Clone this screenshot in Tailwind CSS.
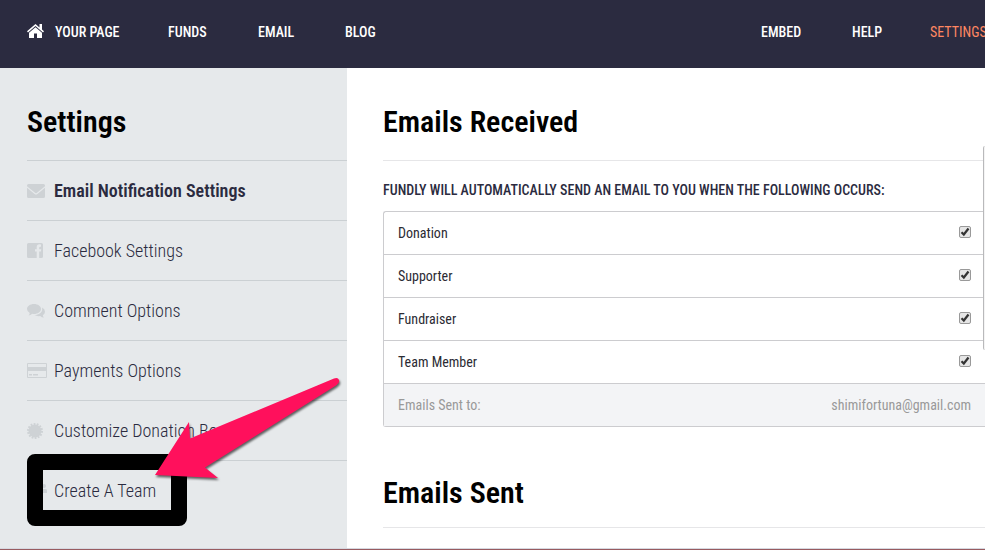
<!DOCTYPE html>
<html lang="en">
<head>
    <meta charset="UTF-8">
    <meta name="viewport" content="width=device-width, initial-scale=1.0">
    <title>Settings - Fundly</title>
    <script src="https://cdn.jsdelivr.net/npm/@tailwindcss/browser@4"></script>
</head>
<body class="relative min-h-screen flex flex-col overflow-x-hidden bg-white text-black font-['Roboto_Condensed','Roboto','Liberation_Sans',sans-serif]">
    <!-- Top navigation -->
    <header class="bg-[#2b2b40] text-white h-17 pl-[27px] flex items-center justify-between text-sm font-medium whitespace-nowrap">
        <nav class="flex items-center pb-1">
            <a href="#" class="flex items-center gap-[11px] w-[141px]">
                <svg class="w-[17px] h-[14px] mb-[3px]" viewBox="0 0 17 14" fill="currentColor">
                    <path d="M8.500 0 0 7.200l1 1.200 7.500-6.300L16 8.400l1-1.200-2-1.700V0h-2.500v3.400z"/>
                    <path d="M8.500 3.300 2 8.800V14h5V9.500h3V14h5V8.800z"/>
                </svg>
                YOUR PAGE
            </a>
            <a href="#" class="w-[90px]">FUNDS</a>
            <a href="#" class="w-[87px]">EMAIL</a>
            <a href="#">BLOG</a>
        </nav>
        <nav class="flex items-center pb-1">
            <a href="#" class="w-[91px]">EMBED</a>
            <a href="#" class="w-[78px]">HELP</a>
            <a href="#" class="w-[55px] font-normal text-[#ff8762]">SETTINGS</a>
        </nav>
    </header>

    <div class="grow flex">
        <!-- Settings menu -->
        <aside class="relative w-[347px] shrink-0 bg-[#e6e9eb] pl-[27px]">
            <h1 class="h-[92px] pt-9 text-[30px] leading-9 font-semibold">Settings</h1>
            <ul class="text-lg leading-6 font-light text-[#2b2b40]">
                <li class="border-t border-[#cbd0d3]">
                    <a href="#" class="flex items-center h-[59px] font-semibold">
                        <svg class="w-[18px] h-[14px] mr-[9px] text-[#ced2d5]" viewBox="0 0 18 14" fill="currentColor">
                            <path d="M1.500 0h15Q18 0 18 1.500v.8L9.700 9.100q-.7.500-1.400 0L0 2.300v-.8Q0 0 1.500 0z"/>
                            <path d="M0 3.800 7.600 10q1.400 1 2.800 0L18 3.800v8.700q0 1.500-1.500 1.500h-15Q0 14 0 12.500z"/>
                        </svg>
                        Email Notification Settings
                    </a>
                </li>
                <li class="border-t border-[#cbd0d3]">
                    <a href="#" class="flex items-center h-[59px]">
                        <svg class="w-4 h-[15px] mr-[11px] text-[#ced2d5]" viewBox="0 0 16 15" fill="currentColor">
                            <path d="M1.500 0h13Q16 0 16 1.500v12q0 1.500-1.500 1.500h-2.300V8.500h1.700l.3-2.200h-2V4.800q0-1.100 1.100-1.100H14V1.500q-4.300-.8-4.300 2.600v2.200H8v2.200h1.700V15H1.500Q0 15 0 13.500v-12Q0 0 1.500 0z"/>
                        </svg>
                        Facebook Settings
                    </a>
                </li>
                <li class="border-t border-[#cbd0d3]">
                    <a href="#" class="flex items-center h-[59px]">
                        <svg class="w-[18px] h-[14px] mr-[9px] text-[#ced2d5]" viewBox="0 0 18 14" fill="currentColor">
                            <path d="M7 0c3.900 0 7 2.200 7 5s-3.100 5-7 5q-.9 0-1.700-.2Q3.400 11.600 1.500 11.600q1.200-1.200 1.200-2.700Q0 7.500 0 5c0-2.800 3.100-5 7-5z"/>
                            <path d="M15 3.500q3 1.500 3 4.200 0 2.200-2.200 3.500.1 1.500 1.200 2.400-2.200 0-3.900-1.600-3 .5-5.600-1C12 11 15.300 8.500 15.200 5z"/>
                        </svg>
                        Comment Options
                    </a>
                </li>
                <li class="border-t border-[#cbd0d3]">
                    <a href="#" class="flex items-center h-[59px]">
                        <svg class="w-5 h-[15px] mr-[7px] text-[#ced2d5]" viewBox="0 0 20 15" fill="currentColor">
                            <path fill-rule="evenodd" d="M1 0h18q1 0 1 1v13q0 1-1 1H1q-1 0-1-1V1Q0 0 1 0zM1 1v3h18V1zM1 8v6h18V8z"/>
                            <path d="M2 11h3v1.500H2zM6 11h5v1.500H6z"/>
                        </svg>
                        Payments Options
                    </a>
                </li>
                <li class="border-t border-[#cbd0d3]">
                    <a href="#" class="flex items-center h-[59px]">
                        <svg class="w-4 h-4 mr-[11px] text-[#ced2d5]" viewBox="0 0 16 16" fill="currentColor">
                            <circle cx="8" cy="8" r="6.500"/>
                            <circle cx="8" cy="8" r="7" fill="none" stroke="currentColor" stroke-width="2" stroke-dasharray="1.800 1.340"/>
                        </svg>
                        Customize Donation Boxes
                    </a>
                </li>
                <li class="border-t border-[#cbd0d3]">
                    <a href="#" class="flex items-center h-[59px]">
                        <svg class="w-5 h-4 mr-[7px] text-[#ced2d5]" viewBox="0 0 20 16" fill="currentColor">
                            <circle cx="10" cy="4" r="3"/>
                            <circle cx="3" cy="3" r="2"/>
                            <circle cx="17" cy="3" r="2"/>
                            <path d="M5 15v-4q0-3 3-3h4q3 0 3 3v4zM0 10V7q0-1 2-1h3v4zM15 6h3q2 0 2 1v3h-5z"/>
                        </svg>
                        Create A Team
                    </a>
                </li>
            </ul>

            <!-- Highlight around the last item, with the arrow that points at it -->
            <div class="absolute left-[27px] top-[386px] w-40 h-18 border-16 border-black rounded-lg"></div>
            <svg class="absolute left-[150px] top-[302px] w-[197px] h-[120px] drop-shadow-[1px_2px_1px_rgba(0,0,0,0.6)]" viewBox="150 370 197 120" fill="#ff105c">
                <path d="M155 475 189 422 190 438.500 334 378.500Q338 377 339 380T336 385.500L205 467.500 218 478z"/>
            </svg>
        </aside>

        <!-- Email settings -->
        <main class="grow min-w-0 pl-9">
            <h2 class="h-[93px] pt-9 text-[30px] leading-9 font-semibold border-b border-[#e6e6e8]">Emails Received</h2>
            <form>
                <h3 class="pt-[19px] pb-[11px] text-sm font-medium text-[#2b2b40]">FUNDLY WILL AUTOMATICALLY SEND AN EMAIL TO YOU WHEN THE FOLLOWING OCCURS:</h3>
                <div class="border border-r-0 border-[#cccccf] rounded-l-[3px] divide-y divide-[#cccccf] text-sm text-[#2b2b33]">
                    <div class="flex items-center justify-between h-[43px] px-[14px]">
                        <label for="donation">Donation</label>
                        <span class="grid size-3 mb-[2px]">
                            <input type="checkbox" id="donation" checked class="peer col-start-1 row-start-1 appearance-none size-3 rounded-[2px] border border-[#999] bg-[#e5e5e5]">
                            <svg class="col-start-1 row-start-1 size-3 pointer-events-none invisible peer-checked:visible" viewBox="0 0 12 12" fill="none" stroke="#333" stroke-width="2.200"><path d="M2.500 6.300 4.800 8.500 9.500 2.500"/></svg>
                        </span>
                    </div>
                    <div class="flex items-center justify-between h-[43px] px-[14px]">
                        <label for="supporter">Supporter</label>
                        <span class="grid size-3 mb-[2px]">
                            <input type="checkbox" id="supporter" checked class="peer col-start-1 row-start-1 appearance-none size-3 rounded-[2px] border border-[#999] bg-[#e5e5e5]">
                            <svg class="col-start-1 row-start-1 size-3 pointer-events-none invisible peer-checked:visible" viewBox="0 0 12 12" fill="none" stroke="#333" stroke-width="2.200"><path d="M2.500 6.300 4.800 8.500 9.500 2.500"/></svg>
                        </span>
                    </div>
                    <div class="flex items-center justify-between h-[43px] px-[14px]">
                        <label for="fundraiser">Fundraiser</label>
                        <span class="grid size-3 mb-[2px]">
                            <input type="checkbox" id="fundraiser" checked class="peer col-start-1 row-start-1 appearance-none size-3 rounded-[2px] border border-[#999] bg-[#e5e5e5]">
                            <svg class="col-start-1 row-start-1 size-3 pointer-events-none invisible peer-checked:visible" viewBox="0 0 12 12" fill="none" stroke="#333" stroke-width="2.200"><path d="M2.500 6.300 4.800 8.500 9.500 2.500"/></svg>
                        </span>
                    </div>
                    <div class="flex items-center justify-between h-[43px] px-[14px]">
                        <label for="teamMember">Team Member</label>
                        <span class="grid size-3 mb-[2px]">
                            <input type="checkbox" id="teamMember" checked class="peer col-start-1 row-start-1 appearance-none size-3 rounded-[2px] border border-[#999] bg-[#e5e5e5]">
                            <svg class="col-start-1 row-start-1 size-3 pointer-events-none invisible peer-checked:visible" viewBox="0 0 12 12" fill="none" stroke="#333" stroke-width="2.200"><path d="M2.500 6.300 4.800 8.500 9.500 2.500"/></svg>
                        </span>
                    </div>
                    <div class="flex items-center justify-between h-[42px] px-[14px] bg-[#f3f4f6] text-[#999]">
                        <span>Emails Sent to:</span>
                        <span>shimifortuna@gmail.com</span>
                    </div>
                </div>
            </form>
            <h2 class="mt-3 h-[89px] pt-9 text-[30px] leading-9 font-semibold border-b border-[#e6e6e8]">Emails Sent</h2>
        </main>
    </div>

    <footer class="h-[2px] border-t border-[#d5d8e0] bg-[#985b60]"></footer>

    <!-- Edge of the side tab -->
    <div class="absolute right-0 top-[146px] w-[2px] h-[204px] rounded-l-[2px] border-l border-[#b9b9bb] bg-[#f4f4f4]"></div>
</body>
</html>
